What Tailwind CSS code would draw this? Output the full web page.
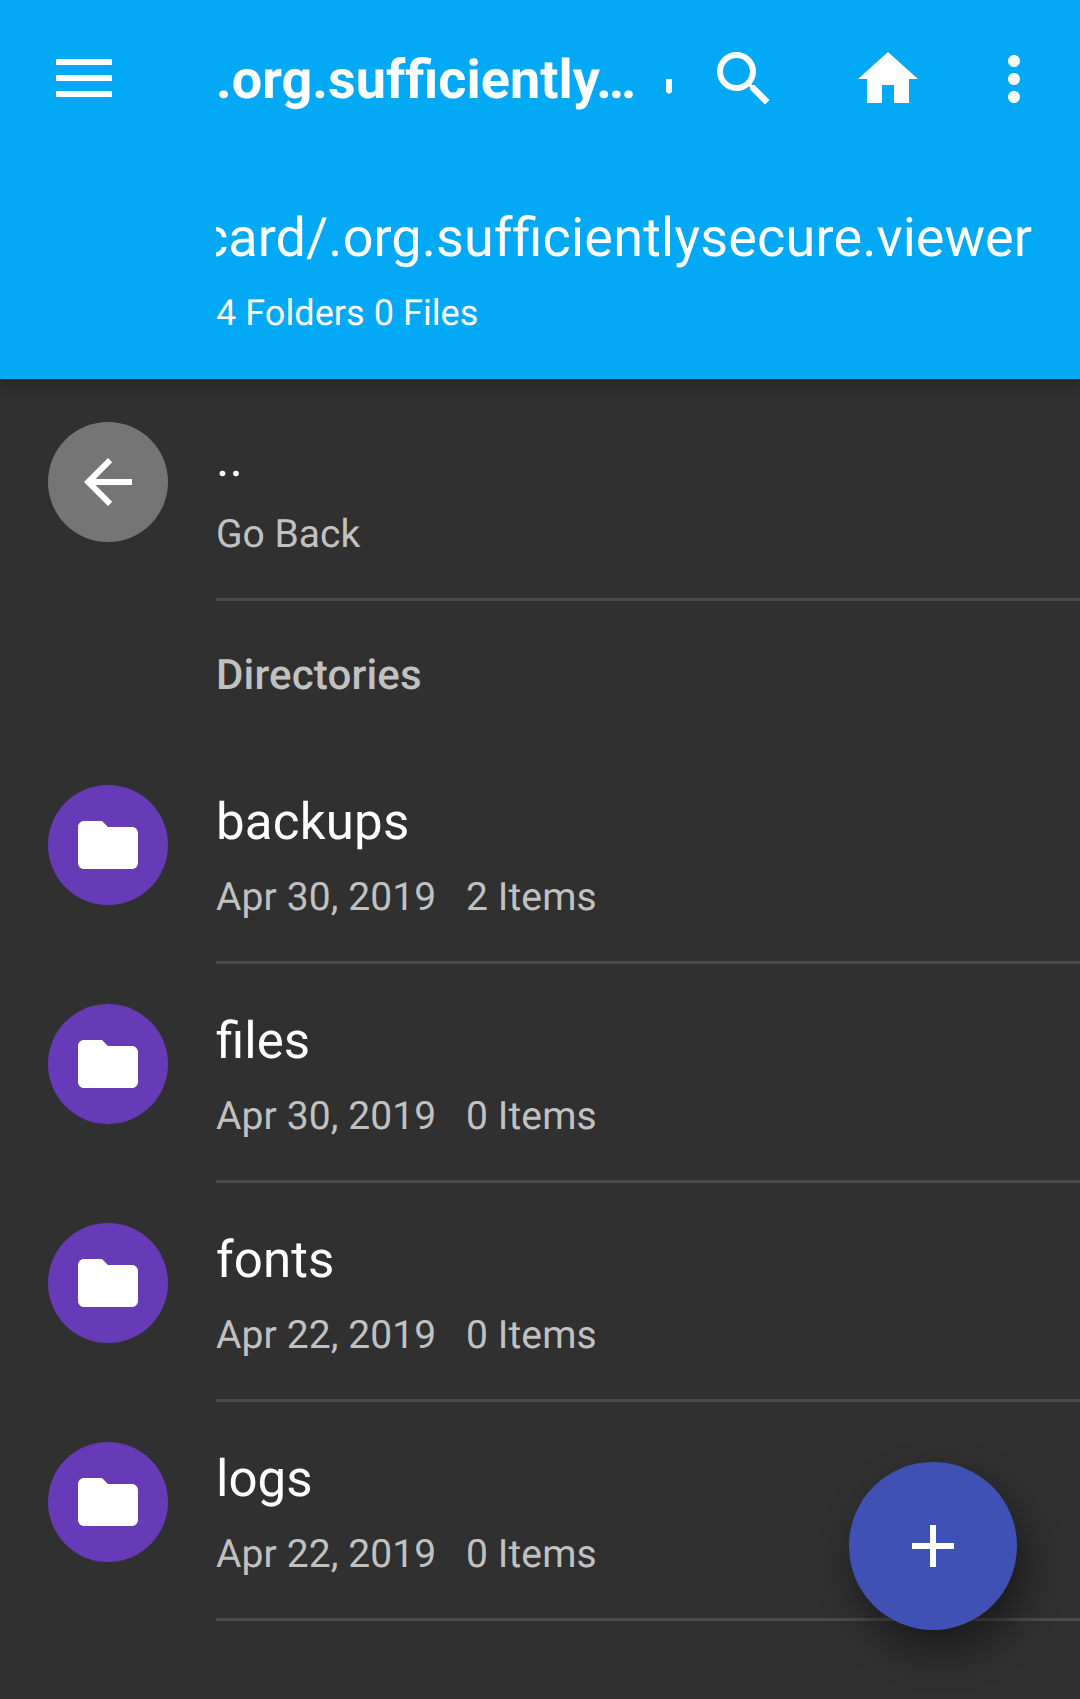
<!DOCTYPE html>
<html lang="en"><head><meta charset="utf-8"><title>Files</title>
<script src="https://cdn.jsdelivr.net/npm/@tailwindcss/browser@4"></script></head>
<body class="bg-[#303030] font-['Roboto',sans-serif] text-white [text-rendering:geometricPrecision]">
<svg class="hidden"><symbol id="folder" viewBox="0 0 24 24"><path d="M10 4H4c-1.100 0-2 .9-2 2v12c0 1.100.9 2 2 2h16c1.100 0 2-.9 2-2V8c0-1.100-.9-2-2-2h-8l-2-2z"/></symbol></svg>
<div class="relative h-[1699px] w-[1080px] overflow-hidden">
<header class="relative h-[379px] bg-[#03a9f4] shadow-[0_3px_12px_rgba(0,0,0,0.3)]">
<div class="flex h-[158px] items-center">
<svg class="ml-12 size-[72px] shrink-0" viewBox="0 0 72 72" fill="currentColor"><path d="M8 16h56v6H8zM8 32h56v6H8zM8 48h56v6H8z"/></svg>
<h1 class="ml-24 w-[450px] shrink-0 whitespace-nowrap pt-[3px] text-[54px] leading-[64px] font-bold"><span class="tracking-[0.01px]">.org.suf</span>fi<span class="tracking-[0.01px]">ciently…</span></h1>
<svg class="mt-[15px] h-[15px] w-1.5 shrink-0" viewBox="0 0 6 15" fill="currentColor"><path d="M0 0h6v13l-3 2-3-2z"/></svg>
<svg class="ml-9 size-[72px] shrink-0" viewBox="0 0 24 24" fill="currentColor"><path d="M15.500 14h-.790l-.280-.270A6.471 6.471 0 0 0 16 9.500 6.500 6.500 0 1 0 9.500 16c1.610 0 3.090-.590 4.230-1.570l.270.280v.790l5 4.990L20.490 19l-4.990-5zm-6 0C7.010 14 5 11.990 5 9.500S7.010 5 9.500 5 14 7.010 14 9.500 11.990 14 9.500 14z"/></svg>
<svg class="ml-[72px] size-[72px] shrink-0" viewBox="0 0 24 24" fill="currentColor"><path d="M10 20v-6h4v6h5v-8h3L12 3 2 12h3v8z"/></svg>
<svg class="ml-[54px] size-[72px] shrink-0" viewBox="0 0 24 24" fill="currentColor"><path d="M12 8c1.100 0 2-.9 2-2s-.9-2-2-2-2 .9-2 2 .9 2 2 2zm0 2c-1.100 0-2 .9-2 2s.9 2 2 2 2-.9 2-2-.9-2-2-2zm0 6c-1.100 0-2 .9-2 2s.9 2 2 2 2-.9 2-2-.9-2-2-2z"/></svg>
</div>
<div class="mt-[49px] ml-[216px] flex w-[816px] justify-end overflow-hidden text-[54px] leading-[64px] whitespace-nowrap"><div><span class="tracking-[0.05px]">card/.org.suf</span>fi<span class="tracking-[0.2px]">cientlysecure</span><span>.viewer</span></div></div>
<p class="mt-[21px] ml-[216px] text-[36px] leading-[42px] tracking-[0.06px]">4 Folders 0 Files</p>
</header>
<main class="pt-[3px]">
<div class="flex h-[219px] pl-12">
<div class="mt-10 mr-12 flex size-[120px] items-center justify-center rounded-full bg-[#757575]"><svg class="size-[72px]" viewBox="0 0 24 24" fill="currentColor"><path d="M20 11H7.830l5.590-5.590L12 4l-8 8 8 8 1.410-1.410L7.830 13H20v-2z"/></svg></div>
<div class="flex-1 border-b-[3px] border-[#4a4a4a] pt-12"><div class="text-[51px] leading-[60px]">..</div><div class="mt-[21px] text-[39px] leading-[46px] text-[#c1c1c1]">Go Back</div></div>
</div>
<h2 class="h-36 pt-[51px] pl-[216px] text-[42px] leading-[48px] font-medium tracking-[0.15px] text-[#c1c1c1]">Directories</h2>
<div class="flex h-[219px] pl-12">
<div class="mt-10 mr-12 flex size-[120px] items-center justify-center rounded-full bg-[#673ab7]"><svg class="size-[72px]" fill="currentColor"><use href="#folder"/></svg></div>
<div class="flex-1 border-b-[3px] border-[#4a4a4a] pt-12"><div class="text-[51px] leading-[60px] tracking-[0.2px]">backups</div><div class="mt-[21px] flex text-[39px] leading-[46px] tracking-[0.1px] text-[#c1c1c1]"><span class="w-[250px]">Apr 30, 2019</span><span>2 Items</span></div></div>
</div>
<div class="flex h-[219px] pl-12">
<div class="mt-10 mr-12 flex size-[120px] items-center justify-center rounded-full bg-[#673ab7]"><svg class="size-[72px]" fill="currentColor"><use href="#folder"/></svg></div>
<div class="flex-1 border-b-[3px] border-[#4a4a4a] pt-12"><div class="text-[51px] leading-[60px]">files</div><div class="mt-[21px] flex text-[39px] leading-[46px] tracking-[0.1px] text-[#c1c1c1]"><span class="w-[250px]">Apr 30, 2019</span><span>0 Items</span></div></div>
</div>
<div class="flex h-[219px] pl-12">
<div class="mt-10 mr-12 flex size-[120px] items-center justify-center rounded-full bg-[#673ab7]"><svg class="size-[72px]" fill="currentColor"><use href="#folder"/></svg></div>
<div class="flex-1 border-b-[3px] border-[#4a4a4a] pt-12"><div class="text-[51px] leading-[60px] tracking-[0.1px]">fonts</div><div class="mt-[21px] flex text-[39px] leading-[46px] tracking-[0.1px] text-[#c1c1c1]"><span class="w-[250px]">Apr 22, 2019</span><span>0 Items</span></div></div>
</div>
<div class="flex h-[219px] pl-12">
<div class="mt-10 mr-12 flex size-[120px] items-center justify-center rounded-full bg-[#673ab7]"><svg class="size-[72px]" fill="currentColor"><use href="#folder"/></svg></div>
<div class="flex-1 border-b-[3px] border-[#4a4a4a] pt-12"><div class="text-[51px] leading-[60px]">logs</div><div class="mt-[21px] flex text-[39px] leading-[46px] tracking-[0.1px] text-[#c1c1c1]"><span class="w-[250px]">Apr 22, 2019</span><span>0 Items</span></div></div>
</div>
</main>
<button class="absolute right-[63px] bottom-[69px] flex size-[168px] items-center justify-center rounded-full bg-[#3f51b5] shadow-[8px_20px_40px_rgba(0,0,0,0.45)]"><svg class="size-[72px]" viewBox="0 0 24 24" fill="currentColor"><path d="M19 13h-6v6h-2v-6H5v-2h6V5h2v6h6v2z"/></svg></button>
</div></body></html>
